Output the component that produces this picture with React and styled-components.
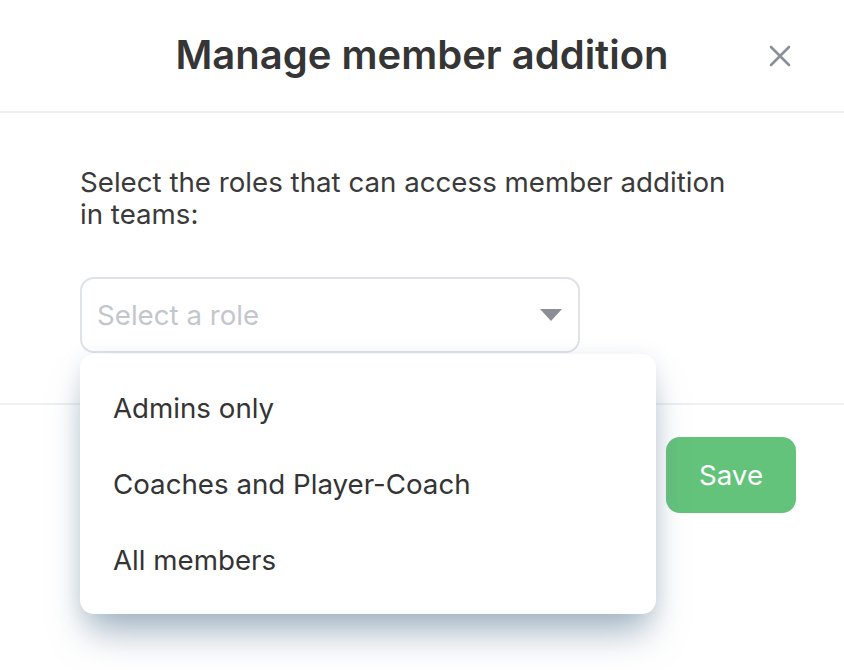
import React from "react";
import styled, { createGlobalStyle } from "styled-components";

const Global = createGlobalStyle`
  html, body { margin: 0; padding: 0; background: #ffffff; }
  body { font-family: Inter, "Noto Sans", sans-serif; color: #333333; }
  * { box-sizing: border-box; }
`;

const Modal = styled.div`
  width: 844px;
  height: 670px;
  background: #fff;
  display: flex;
  flex-direction: column;
`;

const Header = styled.div`
  height: 113px;
  border-bottom: 2px solid #eceff3;
  display: flex;
  align-items: center;
  justify-content: center;
  position: relative;
`;

const Title = styled.h1`
  margin: 0;
  margin-top: -2px;
  font-size: 40px;
  font-weight: 600;
  color: #353535;
  letter-spacing: 0;
`;

const CloseButton = styled.button`
  position: absolute;
  right: 53px;
  top: 45px;
  width: 22px;
  height: 22px;
  padding: 0;
  border: 0;
  background: none;
  display: flex;
  align-items: center;
  justify-content: center;
`;

const Body = styled.div`
  padding: 53px 80px 50px;
  border-bottom: 2px solid #eceff3;
`;

const Prompt = styled.p`
  margin: 0 0 47px;
  font-size: 27.7px;
  line-height: 32px;
  color: #3a3a3a;
  max-width: 665px;
`;

const SelectWrap = styled.div`
  position: relative;
  width: 500px;
`;

const SelectBox = styled.div`
  height: 76px;
  border: 2px solid #dfe3e8;
  border-radius: 14px;
  display: flex;
  align-items: center;
  justify-content: space-between;
  padding: 0 16px 0 15px;
`;

const Placeholder = styled.span`
  font-size: 27.7px;
  color: #c3c7cd;
`;

const Menu = styled.ul`
  position: absolute;
  left: 0;
  top: 77px;
  width: 576px;
  margin: 0;
  padding: 16px 0 16px;
  list-style: none;
  background: #fff;
  border-radius: 14px;
  box-shadow: 0 26px 36px -8px rgba(110, 138, 160, 0.6), 0 4px 20px rgba(130, 155, 178, 0.22);
  z-index: 2;
`;

const MenuItem = styled.li`
  height: 76px;
  display: flex;
  align-items: center;
  padding-left: 33px;
  font-size: 27.7px;
  color: #343434;
`;

const Footer = styled.div`
  display: flex;
  justify-content: flex-end;
  padding: 32px 48px 0;
`;

const SaveButton = styled.button`
  width: 130px;
  height: 76px;
  border: 0;
  border-radius: 14px;
  background: #63c37a;
  color: #fff;
  font-family: Inter, sans-serif;
  font-size: 27.7px;
  font-weight: 400;
`;

export default function App() {
  return (
    <>
      <Global />
      <Modal>
        <Header>
          <Title>Manage member addition</Title>
          <CloseButton aria-label="Close">
            <svg width="22" height="22" viewBox="0 0 22 22">
              <path d="M2 2 L20 20 M20 2 L2 20" stroke="#8a9098" strokeWidth="2.6" strokeLinecap="round" />
            </svg>
          </CloseButton>
        </Header>
        <Body>
          <Prompt>Select the roles that can access member addition in teams:</Prompt>
          <SelectWrap>
            <SelectBox>
              <Placeholder>Select a role</Placeholder>
              <svg width="22" height="12" viewBox="0 0 22 12">
                <path d="M0 0 H22 L11 12 Z" fill="#8a8f96" />
              </svg>
            </SelectBox>
            <Menu>
              <MenuItem>Admins only</MenuItem>
              <MenuItem>Coaches and Player-Coach</MenuItem>
              <MenuItem>All members</MenuItem>
            </Menu>
          </SelectWrap>
        </Body>
        <Footer>
          <SaveButton>Save</SaveButton>
        </Footer>
      </Modal>
    </>
  );
}
